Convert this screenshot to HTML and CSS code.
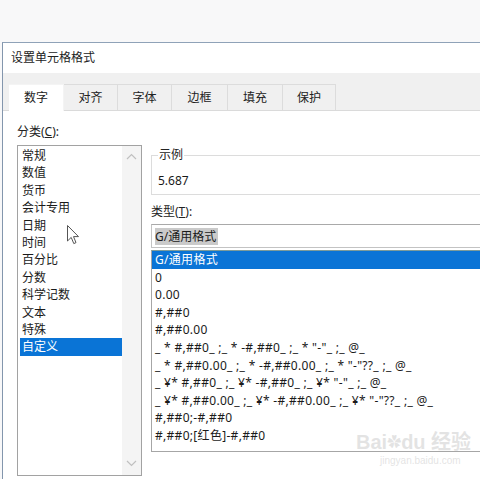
FILE: index.html
```html
<!DOCTYPE html>
<html lang="zh-CN">
<head>
<meta charset="utf-8">
<title>设置单元格格式</title>
<link rel="stylesheet" href="styles.css">
</head>
<body>
<div class="screen">
  <div class="dialog">
    <div class="titlebar">设置单元格格式</div>
    <div class="tabstrip">
      <div class="tab active w55">数字</div>
      <div class="tab w54">对齐</div>
      <div class="tab w54">字体</div>
      <div class="tab w56">边框</div>
      <div class="tab w55">填充</div>
      <div class="tab w53">保护</div>
    </div>
    <div class="content">
      <div class="left">
        <div class="label">分类(<u>C</u>):</div>
        <div class="listbox cat">
          <div class="items">
            <div class="item">常规</div>
            <div class="item">数值</div>
            <div class="item">货币</div>
            <div class="item">会计专用</div>
            <div class="item">日期</div>
            <div class="item">时间</div>
            <div class="item">百分比</div>
            <div class="item">分数</div>
            <div class="item">科学记数</div>
            <div class="item">文本</div>
            <div class="item">特殊</div>
            <div class="item selected">自定义</div>
          </div>
          <div class="scrollbar">
            <svg class="chev" width="11" height="7" viewBox="0 0 11 7"><path d="M1 6 L5.5 1.5 L10 6" fill="none" stroke="#c0c0c0" stroke-width="1.2"/></svg>
            <svg class="chev" width="11" height="7" viewBox="0 0 11 7"><path d="M1 1 L5.5 5.5 L10 1" fill="none" stroke="#c0c0c0" stroke-width="1.2"/></svg>
          </div>
        </div>
      </div>
      <div class="right">
        <fieldset class="sample">
          <legend>示例</legend>
          <div class="sample-val">5.687</div>
        </fieldset>
        <div class="label type-label">类型(<u>T</u>):</div>
        <div class="textbox"><span class="sel">G/通用格式</span></div>
        <div class="listbox fmt">
          <div class="fitem selected">G/通用格式</div>
          <div class="fitem">0</div>
          <div class="fitem">0.00</div>
          <div class="fitem">#,##0</div>
          <div class="fitem">#,##0.00</div>
          <div class="fitem">_ * #,##0_ ;_ * -#,##0_ ;_ * "-"_ ;_ @_</div>
          <div class="fitem">_ * #,##0.00_ ;_ * -#,##0.00_ ;_ * "-"??_ ;_ @_</div>
          <div class="fitem">_ ¥* #,##0_ ;_ ¥* -#,##0_ ;_ ¥* "-"_ ;_ @_</div>
          <div class="fitem">_ ¥* #,##0.00_ ;_ ¥* -#,##0.00_ ;_ ¥* "-"??_ ;_ @_</div>
          <div class="fitem">#,##0;-#,##0</div>
          <div class="fitem">#,##0;[红色]-#,##0</div>
        </div>
      </div>
    </div>
  </div>
  <svg class="cursor" width="13" height="20" viewBox="0 0 13 20"><path d="M0.5 0.5 L0.5 16 L4.2 12.4 L6.8 18.6 L9 17.6 L6.5 11.6 L11.5 11.6 Z" fill="#fff" stroke="#555" stroke-width="1" stroke-linejoin="round"/></svg>
  <div class="watermark">
    <div class="wm-big">Bai<span class="paw">✿</span>du 经验</div>
    <div class="wm-small">jingyan.baidu.com</div>
  </div>
</div>
</body>
</html>
```

FILE: styles.css
```css
html, body {
  margin: 0;
  padding: 0;
}
body {
  font-family: "Noto Sans", "Noto Sans CJK SC", sans-serif;
  font-size: 12px;
  color: #1a1a1a;
  background: #f8f8f9;
}
.screen {
  position: relative;
  width: 480px;
  height: 479px;
  overflow: hidden;
  background: #f8f8f9;
}
.dialog {
  margin: 42px 0 0 2px;
  width: 540px;
  height: 437px;
  background: #fff;
  border-left: 1px solid #8396ad;
  border-top: 1px solid #8fa2b8;
  box-sizing: border-box;
}
.titlebar {
  height: 30px;
  line-height: 30px;
  padding-left: 8px;
  color: #222;
}
.tabstrip {
  display: flex;
  align-items: flex-end;
  height: 38px;
  box-sizing: border-box;
  padding-left: 6px;
  background: #f0f0f0;
  border-bottom: 1px solid #dadada;
}
.tab {
  height: 26px;
  line-height: 25px;
  text-align: center;
  box-sizing: border-box;
  border: 1px solid #dcdcdc;
  border-bottom: none;
  border-left: none;
  background: #f0f0f0;
  color: #222;
}
.tab.active {
  background: #fff;
  border-color: #f4f4f4;
  height: 27px;
  margin-bottom: -1px;
  position: relative;
}
.w53 { width: 53px; }
.w54 { width: 54px; }
.w55 { width: 55px; }
.w56 { width: 56px; }

.content {
  display: flex;
  padding-left: 14px;
}
.left {
  width: 125px;
  flex: none;
}
.label {
  line-height: 16px;
  height: 16px;
  color: #222;
}
.left .label {
  margin-top: 13px;
  margin-bottom: 5px;
}
.label u {
  text-decoration: underline;
  text-underline-offset: 1px;
}
.listbox {
  box-sizing: border-box;
  border: 1px solid #a2a2a2;
  background: #fff;
}
.cat {
  height: 331px;
  display: flex;
}
.items {
  flex: 1;
  padding-top: 1px;
  margin-left: 2px;
}
.item {
  height: 17.4px;
  line-height: 17.4px;
  padding-left: 2px;
}
.item.selected, .fitem.selected {
  background: #0a74d6;
  color: #fff;
}
.scrollbar {
  width: 19px;
  flex: none;
  background: #f4f4f4;
  display: flex;
  flex-direction: column;
  justify-content: space-between;
  align-items: center;
  padding: 7px 0 8px;
  box-sizing: border-box;
}
.chev {
  display: block;
}

.right {
  margin-left: 9px;
  width: 360px;
  flex: none;
}
.sample {
  margin: 36px 0 0 0;
  padding: 0 5px 5px 6px;
  border: 1px solid #dcdcdc;
  min-width: 0;
}
.sample legend {
  padding: 0 1px;
  line-height: 16px;
  color: #222;
}
.sample-val {
  margin-top: 10px;
  line-height: 16px;
  height: 16px;
}
.type-label {
  margin-top: 9px;
}
.textbox {
  margin-top: 4px;
  height: 24px;
  box-sizing: border-box;
  border: 1px solid #c3c3c3;
  border-top-color: #a9a9a9;
  padding: 3px 0 0 3px;
}
.sel {
  display: inline-block;
  background: #cacaca;
  line-height: 17px;
  height: 17px;
  padding-right: 2px;
}
.fmt {
  margin-top: 2px;
  height: 202px;
  border-color: #a6a6a6;
  border-top-color: #7d9c9a;
}
.fitem {
  height: 17.6px;
  line-height: 17.6px;
  padding-left: 3px;
  white-space: pre;
  letter-spacing: 0.3px;
}

.cursor {
  position: absolute;
  left: 67px;
  top: 225px;
}
.watermark {
  position: absolute;
  left: 356px;
  top: 430px;
  color: rgba(200, 200, 200, 0.5);
  font-family: "Liberation Sans", "Noto Sans CJK SC", sans-serif;
  white-space: nowrap;
}
.wm-big {
  font-size: 20px;
  line-height: 24px;
  font-weight: bold;
}
.paw {
  font-size: 14px;
  vertical-align: top;
}
.wm-small {
  font-size: 10px;
  line-height: 14px;
  padding-left: 24px;
}
```
